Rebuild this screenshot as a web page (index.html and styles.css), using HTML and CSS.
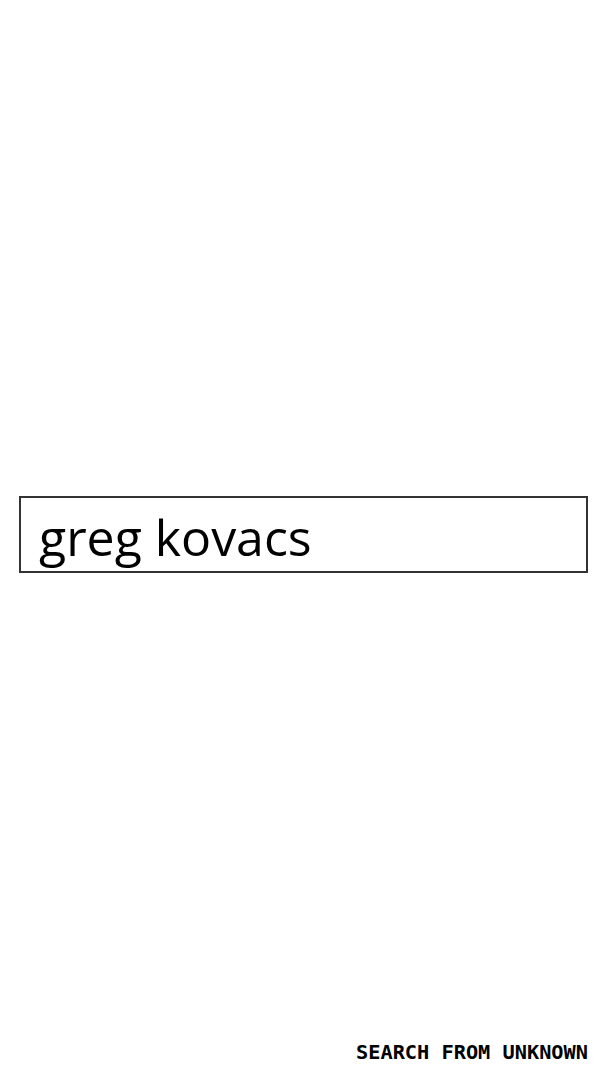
FILE: index.html
```html
<!DOCTYPE html>
<html lang="en">
  <head>
    <meta charset="UTF-8" />
    <meta name="viewport" content="width=device-width, initial-scale=1.0" />
    <title>Search</title>
    <link rel="stylesheet" href="styles.css">
  </head>
  <body>
    <main class="search-area">
      <input type="text" class="search-input" value="greg kovacs" />
    </main>
    <footer class="footer">SEARCH FROM UNKNOWN</footer>
  </body>
</html>
```

FILE: styles.css
```css
html,
body {
  height: 100%;
}

body {
  margin: 0;
  background-color: #ffffff;
  color: #000000;
  display: flex;
  flex-direction: column;
  font-family: "Open Sans", "Noto Sans", sans-serif;
}

.search-area {
  flex: 1;
  display: flex;
  align-items: center;
  padding: 0 20px 0 19px;
  margin-top: 29px;
}

.search-input {
  width: 100%;
  height: 77px;
  box-sizing: border-box;
  border: 2px solid #333;
  padding: 5px 18px 0;
  font-family: "Open Sans", "Noto Sans", sans-serif;
  font-size: 50px;
  color: #000;
  outline: none;
}

.footer {
  text-align: right;
  padding: 0 20px 16px 0;
  font-family: "DejaVu Sans Mono", "Liberation Mono", monospace;
  font-weight: bold;
  font-size: 20.3px;
}
```
